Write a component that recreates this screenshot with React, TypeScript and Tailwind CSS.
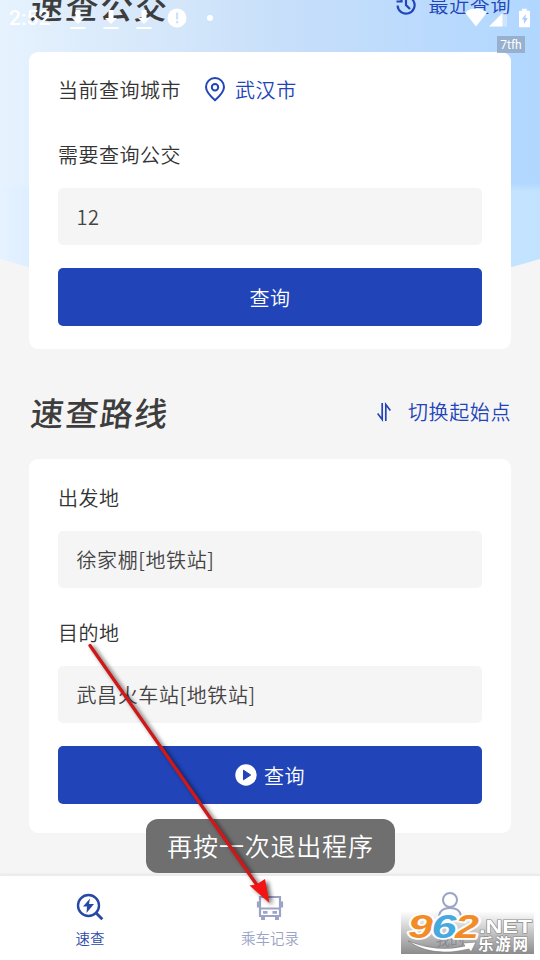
import React from 'react';

const Heading: React.FC<{ title: string; children: React.ReactNode }> = ({ title, children }) => (
  <div className="flex h-[110px] items-center justify-between pl-[2px] pt-[15px]">
    <h2 className="-skew-x-6 pt-px text-[33px] font-medium leading-none tracking-[1.6px] text-[#3d3d3d]">{title}</h2>
    <button className="flex items-center text-[20px] font-[350] tracking-[0.6px] text-[#2144b9]">{children}</button>
  </div>
);

const Label: React.FC<{ children: React.ReactNode }> = ({ children }) => (
  <span className="pt-[2px] text-[20px] font-[350] tracking-[0.5px] text-[#333333]">{children}</span>
);

const Field: React.FC<{ value: string }> = ({ value }) => (
  <div className="mt-[13px] flex h-[57px] items-center rounded-[5px] bg-[#f5f5f5] pl-[18.500px] pt-px text-[20px] font-[350] tracking-[0.6px] text-[#444444]">
    {value}
  </div>
);

const SearchButton: React.FC<{ icon?: React.ReactNode }> = ({ icon }) => (
  <button className="mt-[23px] flex h-[58px] w-full items-center justify-center gap-[7px] rounded-[5px] bg-[#2145b9] text-[20px] font-[350] tracking-[0.5px] text-white">
    {icon}
    <span className="pt-px">查询</span>
  </button>
);

const HistoryIcon = () => (
  <svg width="22" height="22" viewBox="0 0 22 22" fill="none" stroke="currentColor" strokeWidth="2.2">
    <path d="M5 5.200A8.500 8.500 0 1 1 2.600 11.500M11 5.500V11l4 4M1.500 7.500h5V3" />
  </svg>
);

const PinIcon = () => (
  <svg className="ml-[22px]" width="24" height="26" viewBox="0 0 24 26" fill="none" stroke="#2144b9" strokeWidth="2">
    <path d="M12 24.200C6 19 3 15 3 11a9 9 0 0 1 18 0c0 4-3 8-9 13.200z" />
    <circle cx="12" cy="11.300" r="3.200" />
  </svg>
);

const SwapIcon = () => (
  <svg width="14" height="20" viewBox="0 0 14 20" fill="none" stroke="currentColor" strokeWidth="1.700">
    <path d="M5.200 1v16.500L.6 11.500M8.800 19V2.500l4.600 6" />
  </svg>
);

const PlayIcon = () => (
  <svg width="22" height="22" viewBox="0 0 22 22">
    <circle cx="11" cy="11" r="10.700" fill="#fff" />
    <path d="M8.500 6.200v9.600l7.200-4.800z" fill="#2145b9" stroke="#2145b9" strokeLinejoin="round" />
  </svg>
);

const DownloadGlyph = () => (
  <svg width="16" height="22" viewBox="0 0 16 22" fill="#fff">
    <path d="M5.500 2h5v8H14l-6 6-6-6h3.500zM.5 19h15v2H.5z" />
  </svg>
);

const StatusBar = () => (
  <div className="absolute inset-x-0 top-0 z-20 flex h-9 items-center text-white">
    <span className="w-[61px] pl-[9px] pt-[2px] font-['Roboto'] text-[21px] font-medium">2:52</span>
    <div className="flex items-center gap-[17px] pl-[9px] pt-px">
      <DownloadGlyph />
      <DownloadGlyph />
      <DownloadGlyph />
    </div>
    <svg className="ml-[15px]" width="20" height="20" viewBox="0 0 20 20">
      <circle cx="10" cy="10" r="9.500" fill="#fff" />
      <path d="M9 4.500h2.200v7H9zm0 8.500h2.200v2.200H9z" fill="#cfe3f8" />
    </svg>
    <span className="ml-[20px] h-[6px] w-[6px] rounded-full bg-white" />
    <div className="ml-auto flex items-center pr-[10px]">
      <svg width="24" height="20" viewBox="0 0 24 20" fill="#fff">
        <path d="M1 4.500C7-.7 17-.7 23 4.500L12 18.500z" />
      </svg>
      <svg width="20" height="20" viewBox="0 0 20 20" fill="#fff">
        <path d="M1 18.500 14.500 5v13.500z" />
        <path d="M14.500 5l4.500-4.500v18h-4.500z" opacity=".35" />
      </svg>
      <svg className="ml-[11px]" width="11" height="20" viewBox="0 0 12 20">
        <path d="M3.500 0h5v2H11q1 0 1 1v16q0 1-1 1H1q-1 0-1-1V3q0-1 1-1h2.500z" fill="#fff" />
        <path d="M7.500 5.500 3 11.500h2.500v5l4-6.500H7z" fill="#a9cdf6" />
      </svg>
    </div>
  </div>
);

const Backdrop = () => (
  <div className="absolute inset-x-0 top-0 h-[300px]">
    <svg width="540" height="300" viewBox="0 0 540 300">
      <defs>
        <linearGradient id="sky" x1="0" y1="0" x2="1" y2="0">
          <stop offset="0" stopColor="#e6f2fe" />
          <stop offset=".3" stopColor="#d5e7fa" />
          <stop offset=".55" stopColor="#c6defa" />
          <stop offset="1" stopColor="#b1d7ff" />
        </linearGradient>
        <linearGradient id="low" x1="0" y1="0" x2="1" y2="0">
          <stop offset="0" stopColor="#e6f3ff" />
          <stop offset=".06" stopColor="#dceeff" />
          <stop offset="1" stopColor="#c2e3ff" />
        </linearGradient>
        <linearGradient id="seam" x1="0" y1="0" x2="0" y2="1">
          <stop offset=".96" stopColor="#fff" />
          <stop offset="1" stopColor="#000" />
        </linearGradient>
        <mask id="fade">
          <path d="M0 0h540v191H0z" fill="url(#seam)" />
        </mask>
      </defs>
      <path d="M0 0h540v259Q270 340 0 259z" fill="url(#low)" />
      <path d="M0 0h540v191H0z" fill="url(#sky)" mask="url(#fade)" />
    </svg>
  </div>
);

const TabBar = () => (
  <nav className="absolute inset-x-0 bottom-0 grid h-[85px] grid-cols-3 border-t border-[#ececec] bg-white text-[14.500px] font-[350] shadow-[0_-1px_2px_rgba(0,0,0,0.06)]">
    <div className="flex flex-col items-center pt-[17px] text-[#2848a8]">
      <svg width="28" height="28" viewBox="0 0 28 28" fill="none" stroke="currentColor">
        <circle cx="12.500" cy="12.500" r="10.500" strokeWidth="2.400" />
        <path d="m19.800 19.800 6.500 6.500" strokeWidth="2.800" />
        <path d="M14 5.500 7 13.500h4L10.500 20l7.500-9h-5z" fill="currentColor" stroke="none" />
      </svg>
      <span className="mt-[6px] leading-[22px]">速查</span>
    </div>
    <div className="flex flex-col items-center pt-[17px] text-[#9ba3c6]">
      <svg width="28" height="28" viewBox="0 0 28 28" fill="none" stroke="currentColor" strokeWidth="2.200">
        <path d="M4 4h20v19H4zM4 15.500h20M2 8.500v6M26 8.500v6" />
        <path d="M7 19.300h4.500M16.500 19.300H21" strokeWidth="2.800" />
        <path d="M7 23v4M21 23v4" strokeWidth="4" />
      </svg>
      <span className="mt-[6px] leading-[22px]">乘车记录</span>
    </div>
    <div className="flex flex-col items-center pt-[15px] text-[#9ba3c6]">
      <svg width="28" height="30" viewBox="0 0 28 30" fill="none" stroke="currentColor" strokeWidth="2">
        <circle cx="14" cy="9" r="7" />
        <path d="M3 28v-3q1-8 11-8t11 8v3z" />
      </svg>
      <span className="mt-[7px] leading-[22px]">我的</span>
    </div>
  </nav>
);

const Watermark = () => (
  <div className="absolute left-[401px] top-[911px] z-30 h-[43px] w-[133px] bg-gradient-to-b from-white/0 to-[#777777]/85">
    <svg className="overflow-visible" width="133" height="43" viewBox="0 0 133 43">
      <g fontFamily="Liberation Sans" fontWeight="bold" fontStyle="italic" fontSize="33" strokeLinejoin="round" paintOrder="stroke" stroke="#fff" strokeWidth="3.500">
        <text x="7" y="27" fill="#f28c28" textLength="25" lengthAdjust="spacingAndGlyphs">9</text>
        <text x="30.500" y="27" fill="#48a9e0" textLength="25" lengthAdjust="spacingAndGlyphs">6</text>
        <text x="54" y="27" fill="#f28c28" textLength="24" lengthAdjust="spacingAndGlyphs">2</text>
      </g>
      <path d="M7 30q30 12 57 5l-2-3 13-1-5 10-2-3Q31 47 7 30z" fill="#fff" stroke="#777" strokeWidth=".6" />
      <g fill="#fff" stroke="#888" strokeWidth="1.200" paintOrder="stroke" fontWeight="bold">
        <text x="78" y="22" fontFamily="Liberation Sans" fontSize="19" textLength="53" lengthAdjust="spacingAndGlyphs">.NET</text>
        <text x="77" y="39" fontFamily="Noto Sans CJK SC" fontSize="15.500" textLength="50">乐游网</text>
      </g>
    </svg>
  </div>
);

const PointerArrow = () => (
  <svg className="pointer-events-none absolute left-0 top-0 z-40" width="540" height="960" viewBox="0 0 540 960">
    <g className="drop-shadow-[3px_2px_2px_rgba(0,0,0,0.6)]">
      <path d="M90 645.500 259 888" stroke="#d01818" strokeWidth="3.300" strokeLinecap="round" />
      <path d="M269.500 903 249.500 885.500l7-1 8.500-5.500z" fill="#f51212" />
    </g>
  </svg>
);

export default function App() {
  return (
    <div className="relative h-[960px] w-[540px] overflow-hidden bg-[#f5f5f5] font-['Noto_Sans_CJK_SC',sans-serif]">
      <Backdrop />
      <StatusBar />
      <span className="absolute left-[497px] top-[36px] z-20 flex h-[17px] w-[28px] items-center justify-center bg-[#8ea6c0]/80 font-['Roboto'] text-[12px] text-white">
        7tfh
      </span>

      <main className="relative -mt-[58px] px-[29px]">
        <Heading title="速查公交">
          <HistoryIcon />
          <span className="ml-[12px] pt-px">最近查询</span>
        </Heading>
        <section className="rounded-[9px] bg-white px-[29px] pb-[23px] pt-[16px]">
          <div className="flex h-[42px] items-center">
            <Label>当前查询城市</Label>
            <PinIcon />
            <span className="ml-[8px] pt-[2px] text-[20px] font-[350] tracking-[0.6px] text-[#2144b9]">武汉市</span>
          </div>
          <div className="mt-[23px] flex h-[42px] items-center">
            <Label>需要查询公交</Label>
          </div>
          <Field value="12" />
          <SearchButton />
        </section>

        <Heading title="速查路线">
          <SwapIcon />
          <span className="ml-[17px] pt-px">切换起始点</span>
        </Heading>
        <section className="rounded-[9px] bg-white px-[29px] pb-[29px] pt-[17px]">
          <div className="flex h-[42px] items-center">
            <Label>出发地</Label>
          </div>
          <Field value="徐家棚[地铁站]" />
          <div className="mt-[23px] flex h-[42px] items-center">
            <Label>目的地</Label>
          </div>
          <Field value="武昌火车站[地铁站]" />
          <SearchButton icon={<PlayIcon />} />
        </section>
      </main>

      <TabBar />
      <div className="absolute left-[146px] top-[819px] z-20 flex h-[54px] w-[249px] items-center justify-center rounded-[12px] bg-[#6f6f6f] text-[25px] font-[350] tracking-[0.8px] text-white">
        再按一次退出程序
      </div>
      <Watermark />
      <PointerArrow />
    </div>
  );
}
